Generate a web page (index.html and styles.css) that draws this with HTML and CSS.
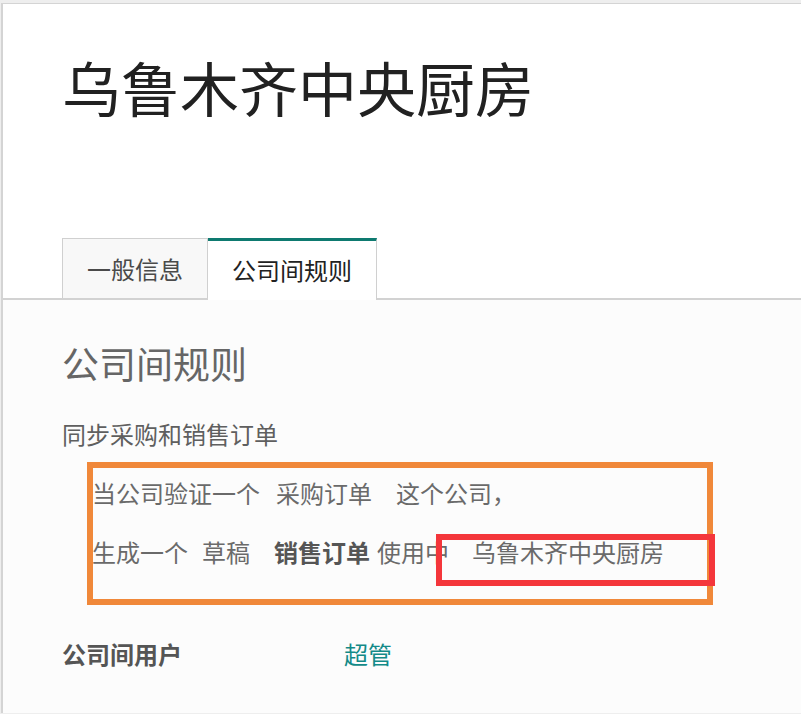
FILE: index.html
```html
<!DOCTYPE html>
<html lang="zh">
<head>
<meta charset="utf-8">
<title>乌鲁木齐中央厨房</title>
<link rel="stylesheet" href="styles.css">
</head>
<body>
<div class="sheet">
  <div class="header">
    <h1 class="title">乌鲁木齐中央厨房</h1>
    <div class="tabs">
      <div class="tab">一般信息</div>
      <div class="tab active">公司间规则</div>
    </div>
  </div>
  <div class="content">
    <h2 class="section-title">公司间规则</h2>
    <div class="label">同步采购和销售订单</div>
    <div class="rule-line"><span>当公司验证一个</span><span class="gap16">采购订单</span><span class="gap24">这个公司，</span></div>
    <div class="rule-line second"><span>生成一个</span><span class="gap14">草稿</span><b class="gap24">销售订单</b><span class="gap7">使用中</span><span class="gap23">乌鲁木齐中央厨房</span></div>
    <div class="user-row">
      <div class="user-label">公司间用户</div>
      <div class="user-value">超管</div>
    </div>
  </div>
</div>
<div class="mark mark-orange"></div>
<div class="mark mark-red"></div>
</body>
</html>
```
FILE: styles.css
```css
html, body {
  margin: 0;
  padding: 0;
}
body {
  background: #eeeeee;
  padding: 3px 0 0 1px;
  font-family: "Noto Sans CJK SC", "Noto Sans", sans-serif;
  position: relative;
}
.sheet {
  background: #fcfcfc;
  border-top: 1px solid #d4d4d4;
  border-left: 2px solid #d4d4d4;
  min-height: 710px;
  box-sizing: border-box;
}
.header {
  padding: 53px 0 0 59px;
  background: #ffffff;
  border-bottom: 2px solid #d2d2d2;
}
.title {
  margin: 0;
  font-size: 59px;
  line-height: 59px;
  font-weight: 400;
  color: #212121;
}
.tabs {
  display: flex;
  margin-top: 122px;
  margin-bottom: -2px;
}
.tab {
  height: 60px;
  box-sizing: border-box;
  padding: 0 24px;
  display: flex;
  align-items: center;
  font-size: 24px;
  line-height: 24px;
  color: #4a4a4a;
  background: #f8f8f8;
  border: 1px solid #d0d0d0;
  border-bottom: none;
}
.tab.active {
  height: 62px;
  padding-bottom: 2px;
  background: #ffffff;
  color: #222222;
  border-top: 3px solid #0e7a70;
  border-left: none;
}
.content {
  background: #fcfcfc;
  padding: 45px 0 40px 59px;
}
.section-title {
  margin: 0;
  font-size: 37px;
  line-height: 37px;
  font-weight: 400;
  color: #666666;
}
.label {
  margin-top: 40px;
  font-size: 24px;
  line-height: 24px;
  color: #5f5f5f;
}
.rule-line {
  margin: 35px 0 0 30px;
  display: flex;
  font-size: 24px;
  line-height: 24px;
  color: #6a6a6a;
  white-space: nowrap;
}
.rule-line b {
  font-weight: 700;
  color: #555555;
}
.gap7 { margin-left: 7px; }
.gap14 { margin-left: 14px; }
.gap16 { margin-left: 16px; }
.gap23 { margin-left: 23px; }
.gap24 { margin-left: 24px; }
.user-row {
  margin-top: 78px;
  display: flex;
  font-size: 24px;
  line-height: 24px;
}
.user-label {
  width: 282px;
  font-weight: 700;
  color: #555555;
}
.user-value {
  color: #138a88;
}
.mark {
  position: absolute;
  box-sizing: border-box;
  border-style: solid;
  border-width: 6px;
}
.mark-orange {
  left: 87px;
  top: 462px;
  width: 626px;
  height: 143px;
  border-color: #f0883a;
}
.mark-red {
  left: 436px;
  top: 534px;
  width: 279px;
  height: 52px;
  border-color: #f4363b;
}
```
